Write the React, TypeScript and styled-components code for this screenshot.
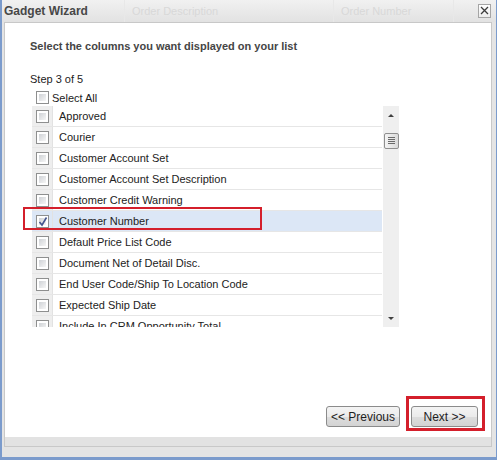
import React from 'react';
import styled, { createGlobalStyle } from 'styled-components';

const GlobalStyle = createGlobalStyle`
  html, body {
    margin: 0;
    padding: 0;
    background: #ffffff;
  }
  body {
    font-family: 'Liberation Sans', Arial, sans-serif;
  }
`;

const columns = [
  'Approved',
  'Courier',
  'Customer Account Set',
  'Customer Account Set Description',
  'Customer Credit Warning',
  'Customer Number',
  'Default Price List Code',
  'Document Net of Detail Disc.',
  'End User Code/Ship To Location Code',
  'Expected Ship Date',
  'Include In CRM Opportunity Total',
];

const WizardWindow = styled.div`
  position: relative;
  box-sizing: border-box;
  width: 497px;
  height: 460px;
  display: flex;
  flex-direction: column;
  background: #e4e4e4;
  border-style: solid;
  border-color: #7b9bcc;
  border-width: 0 1px 3px 2px;
`;

const TitleBar = styled.div`
  height: 22px;
  flex: none;
  display: flex;
  align-items: center;
  background: linear-gradient(#f1f1f1, #e2e2e2);
`;

const TitleCell = styled.div<{ $width: number; $ghost?: boolean }>`
  box-sizing: border-box;
  width: ${(p) => p.$width}px;
  height: 22px;
  display: flex;
  align-items: center;
  padding-left: ${(p) => (p.$ghost ? 7 : 2)}px;
  border-right: 1px solid #e8e8e8;
  font-size: ${(p) => (p.$ghost ? 11 : 12)}px;
  font-weight: ${(p) => (p.$ghost ? 'normal' : 'bold')};
  color: ${(p) => (p.$ghost ? '#d8d8d8' : '#474747')};
  white-space: nowrap;
`;

const CloseButton = styled.div`
  box-sizing: border-box;
  width: 13px;
  height: 14px;
  margin: 0 5px 1px auto;
  border: 1px solid #a5a5a5;
  background: linear-gradient(#ffffff, #ececec);
  display: flex;
  align-items: center;
  justify-content: center;
`;

const Panel = styled.div`
  flex: 1;
  display: flex;
  flex-direction: column;
  margin: 0 4px 10px 2px;
  border: 1px solid #c8c8c8;
  background: #ffffff;
`;

const Body = styled.div`
  flex: 1;
  display: flex;
  flex-direction: column;
  padding: 16px 13px 10px 25px;
`;

const FooterBand = styled.div`
  height: 9px;
  background: #e2e2e2;
`;

const Heading = styled.div`
  font-size: 11px;
  line-height: 14px;
  font-weight: bold;
  color: #454545;
`;

const StepLabel = styled.div`
  margin-top: 19px;
  font-size: 11px;
  line-height: 14px;
  color: #222222;
`;

const SelectAllRow = styled.label`
  margin: 4px 0 0 6px;
  height: 15px;
  display: flex;
  align-items: center;
  gap: 3px;
  font-size: 11px;
  color: #222222;
`;

const Box = styled.span`
  position: relative;
  box-sizing: border-box;
  width: 13px;
  height: 13px;
  flex: none;
  border: 1px solid #8e8f8f;
  background: #ffffff;
  &::before {
    content: '';
    position: absolute;
    inset: 2px;
    background: linear-gradient(135deg, #cfd2d6, #f6f6f6);
  }
  svg {
    position: absolute;
    left: 1px;
    top: 0px;
  }
`;

const ListFrame = styled.div`
  margin: 1px 0 0 2px;
  width: 367px;
  height: 221px;
  display: flex;
  overflow: hidden;
`;

const Rows = styled.div`
  flex: 1;
  overflow: hidden;
`;

const Row = styled.div<{ $selected?: boolean }>`
  height: 20px;
  display: flex;
  align-items: center;
  border-bottom: 1px solid #e6e6e6;
  background: ${(p) => (p.$selected ? '#dce7f6' : '#ffffff')};
  font-size: 11px;
  color: #222222;
`;

const CheckCell = styled.div<{ $selected?: boolean }>`
  box-sizing: border-box;
  width: 21px;
  height: 20px;
  display: flex;
  align-items: center;
  justify-content: center;
  background: ${(p) => (p.$selected ? '#dce7f6' : '#eeeeee')};
  border-right: 1px solid #e2e2e2;
`;

const RowLabel = styled.span`
  padding-left: 6px;
  white-space: nowrap;
`;

const ScrollTrack = styled.div`
  width: 16px;
  margin-left: 1px;
  display: flex;
  flex-direction: column;
  align-items: center;
  background: #efefef;
`;

const Arrow = styled.div<{ $down?: boolean }>`
  width: 0;
  height: 0;
  margin-top: ${(p) => (p.$down ? 'auto' : '8px')};
  margin-bottom: ${(p) => (p.$down ? '7px' : '0')};
  border-left: 3px solid transparent;
  border-right: 3px solid transparent;
  ${(p) =>
    p.$down ? 'border-top: 3px solid #404040;' : 'border-bottom: 3px solid #404040;'}
`;

const Thumb = styled.div`
  box-sizing: border-box;
  margin-top: 16px;
  width: 15px;
  height: 16px;
  border: 1px solid #8f8f8f;
  border-radius: 2px;
  background: linear-gradient(90deg, #f4f4f4, #dadada);
  display: flex;
  align-items: center;
  justify-content: center;
`;

const ButtonRow = styled.div`
  margin-top: auto;
  display: flex;
  justify-content: flex-end;
  gap: 11px;
`;

const WizardButton = styled.button<{ $width: number }>`
  box-sizing: border-box;
  width: ${(p) => p.$width}px;
  height: 21px;
  padding: 0;
  border: 1px solid #8b8b8b;
  border-radius: 3px;
  background: linear-gradient(#f4f4f4 0%, #ebebeb 50%, #dddddd 51%, #d3d3d3 100%);
  font-family: 'Liberation Sans', Arial, sans-serif;
  font-size: 12px;
  color: #1e1e1e;
`;

const Callout = styled.div<{ $x: number; $y: number; $w: number; $h: number; $line: number }>`
  position: absolute;
  box-sizing: border-box;
  left: ${(p) => p.$x}px;
  top: ${(p) => p.$y}px;
  width: ${(p) => p.$w}px;
  height: ${(p) => p.$h}px;
  border: ${(p) => p.$line}px solid #d41f2b;
  pointer-events: none;
`;

const Check = () => (
  <svg width="10" height="11" viewBox="0 0 10 11">
    <path d="M1.5 6 L4 9 L8.5 1.5" fill="none" stroke="#43558e" strokeWidth="1.6" />
  </svg>
);

const CheckBox = ({ checked }: { checked?: boolean }) => <Box>{checked && <Check />}</Box>;

export default function App() {
  return (
    <>
      <GlobalStyle />
      <WizardWindow>
        <TitleBar>
          <TitleCell $width={123}>Gadget Wizard</TitleCell>
          <TitleCell $width={209} $ghost>
            Order Description
          </TitleCell>
          <TitleCell $width={120} $ghost>
            Order Number
          </TitleCell>
          <CloseButton>
            <svg width="9" height="9" viewBox="0 0 9 9">
              <path d="M1 1 L8 8 M8 1 L1 8" stroke="#3c3c3c" strokeWidth="1.3" />
            </svg>
          </CloseButton>
        </TitleBar>
        <Panel>
          <Body>
            <Heading>Select the columns you want displayed on your list</Heading>
            <StepLabel>Step 3 of 5</StepLabel>
            <SelectAllRow>
              <CheckBox />
              Select All
            </SelectAllRow>
            <ListFrame>
              <Rows>
                {columns.map((name) => {
                  const selected = name === 'Customer Number';
                  return (
                    <Row key={name} $selected={selected}>
                      <CheckCell $selected={selected}>
                        <CheckBox checked={selected} />
                      </CheckCell>
                      <RowLabel>{name}</RowLabel>
                    </Row>
                  );
                })}
              </Rows>
              <ScrollTrack>
                <Arrow />
                <Thumb>
                  <svg width="7" height="8" viewBox="0 0 7 8">
                    <path d="M0 0.5 H7 M0 2.5 H7 M0 4.5 H7 M0 6.5 H7" stroke="#6a6a6a" strokeWidth="1" />
                  </svg>
                </Thumb>
                <Arrow $down />
              </ScrollTrack>
            </ListFrame>
            <ButtonRow>
              <WizardButton $width={74}>&lt;&lt; Previous</WizardButton>
              <WizardButton $width={67}>Next &gt;&gt;</WizardButton>
            </ButtonRow>
          </Body>
          <FooterBand />
        </Panel>
        <Callout $x={21} $y={207} $w={239} $h={23} $line={2} />
        <Callout $x={404} $y={396} $w={79} $h={35} $line={3} />
      </WizardWindow>
    </>
  );
}
